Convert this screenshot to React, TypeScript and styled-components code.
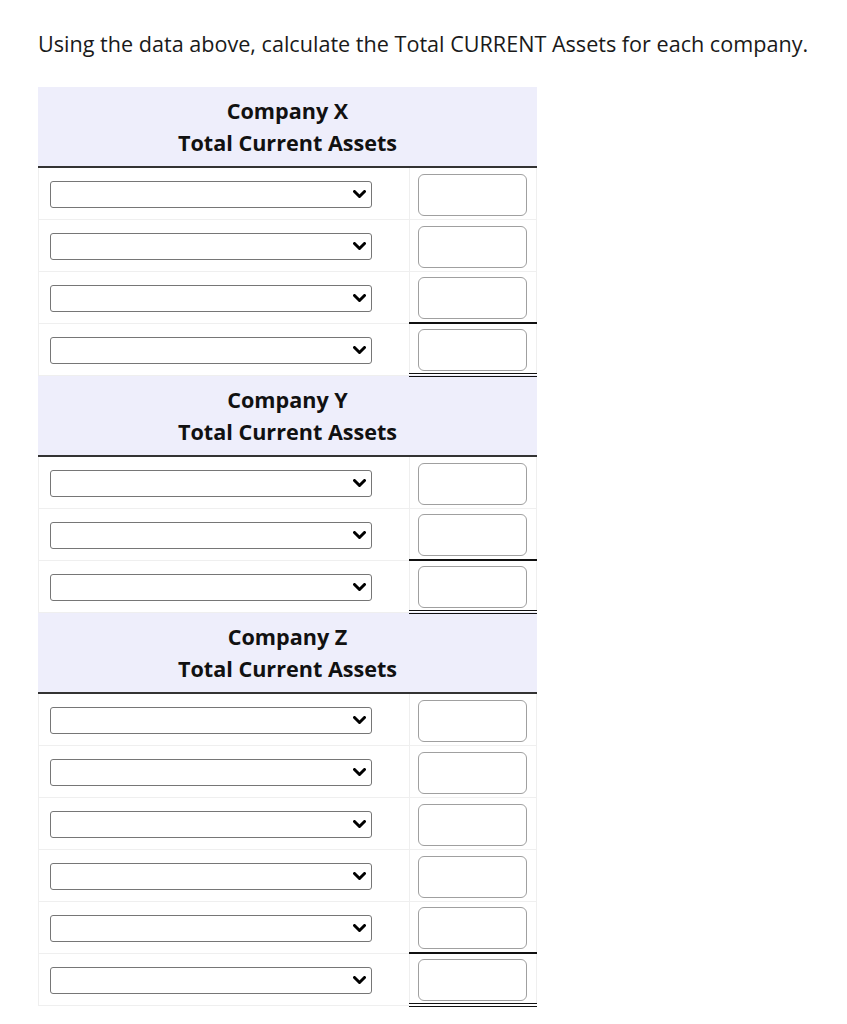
import React, { FC } from 'react';
import styled, { createGlobalStyle } from 'styled-components';

const GlobalStyle = createGlobalStyle`
	body {
		margin: 0;
		background: #fff;
		font-family: 'Open Sans', 'Liberation Sans', sans-serif;
		color: #1a1a1a;
	}
`;

const Page = styled.div`
	padding: 29px 38px 20px;
`;

const Prompt = styled.p`
	margin: 0 0 28px;
	font-size: 21.6px;
	line-height: 30px;
`;

const Sheet = styled.table`
	width: 498px;
	border-collapse: collapse;
	table-layout: fixed;
`;

const Col = styled.col<{ $width: number }>`
	width: ${({ $width }) => $width}px;
`;

const HeadCell = styled.th`
	background: #eeeefb;
	border: 1px solid #eeeefb;
	border-bottom: 2px solid #333;
	padding: 7px 0 7px;
	font-size: 21.6px;
	font-weight: 700;
	line-height: 32px;
	text-align: center;
	color: #111;
`;

const LabelCell = styled.td`
	height: 52px;
	padding: 3px 0 0 11px;
	border: 1px solid #efefef;
	vertical-align: middle;
	box-sizing: border-box;
`;

type Rule = 'none' | 'single' | 'double';

const AmountCell = styled.td<{ $rule: Rule }>`
	height: 52px;
	padding: 3px 0 0 8px;
	border: 1px solid #efefef;
	vertical-align: middle;
	box-sizing: border-box;
	${({ $rule }) =>
		$rule === 'single'
			? 'border-bottom: 2px solid #111;'
			: $rule === 'double'
			? 'border-bottom: 4px double #111;'
			: ''}
`;

const SelectWrap = styled.div`
	position: relative;
	width: 322px;
	height: 27px;
`;

const Select = styled.select`
	appearance: none;
	display: block;
	width: 100%;
	height: 100%;
	margin: 0;
	border: 1px solid #767676;
	border-radius: 3px;
	background: #fff;
	box-sizing: border-box;
	font-family: inherit;
	font-size: 14px;
`;

const Chevron = styled.svg`
	position: absolute;
	right: 6px;
	top: 9px;
	pointer-events: none;
`;

const Amount = styled.input`
	display: block;
	width: 109px;
	height: 42px;
	margin: 0;
	padding: 0 6px;
	border: 1px solid #a0a0a0;
	border-radius: 6px;
	box-sizing: border-box;
	font-family: inherit;
	font-size: 14px;
`;

const ChevronIcon: FC = () => (
	<Chevron width='13' height='9' viewBox='0 0 13 9'>
		<path d='M1.5 1.5 L6.5 6.5 L11.5 1.5' fill='none' stroke='#000' strokeWidth='3' strokeLinecap='round' strokeLinejoin='round' />
	</Chevron>
);

interface Section {
	name: string;
	rows: number;
}

const sections: Section[] = [
	{ name: 'Company X', rows: 4 },
	{ name: 'Company Y', rows: 3 },
	{ name: 'Company Z', rows: 6 },
];

const App: FC = () => {
	return (
		<>
			<GlobalStyle />
			<Page>
				<Prompt>Using the data above, calculate the Total CURRENT Assets for each company.</Prompt>
				<Sheet>
					<colgroup>
						<Col $width={371} />
						<Col $width={127} />
					</colgroup>
					{sections.map((section) => (
						<tbody key={section.name}>
							<tr>
								<HeadCell colSpan={2}>
									{section.name}
									<br />
									Total Current Assets
								</HeadCell>
							</tr>
							{Array.from({ length: section.rows }).map((_, i) => {
								const rule: Rule =
									i === section.rows - 1 ? 'double' : i === section.rows - 2 ? 'single' : 'none';
								return (
									<tr key={i}>
										<LabelCell>
											<SelectWrap>
												<Select defaultValue=''>
													<option value=''></option>
												</Select>
												<ChevronIcon />
											</SelectWrap>
										</LabelCell>
										<AmountCell $rule={rule}>
											<Amount type='text' />
										</AmountCell>
									</tr>
								);
							})}
						</tbody>
					))}
				</Sheet>
			</Page>
		</>
	);
};

export default App;
